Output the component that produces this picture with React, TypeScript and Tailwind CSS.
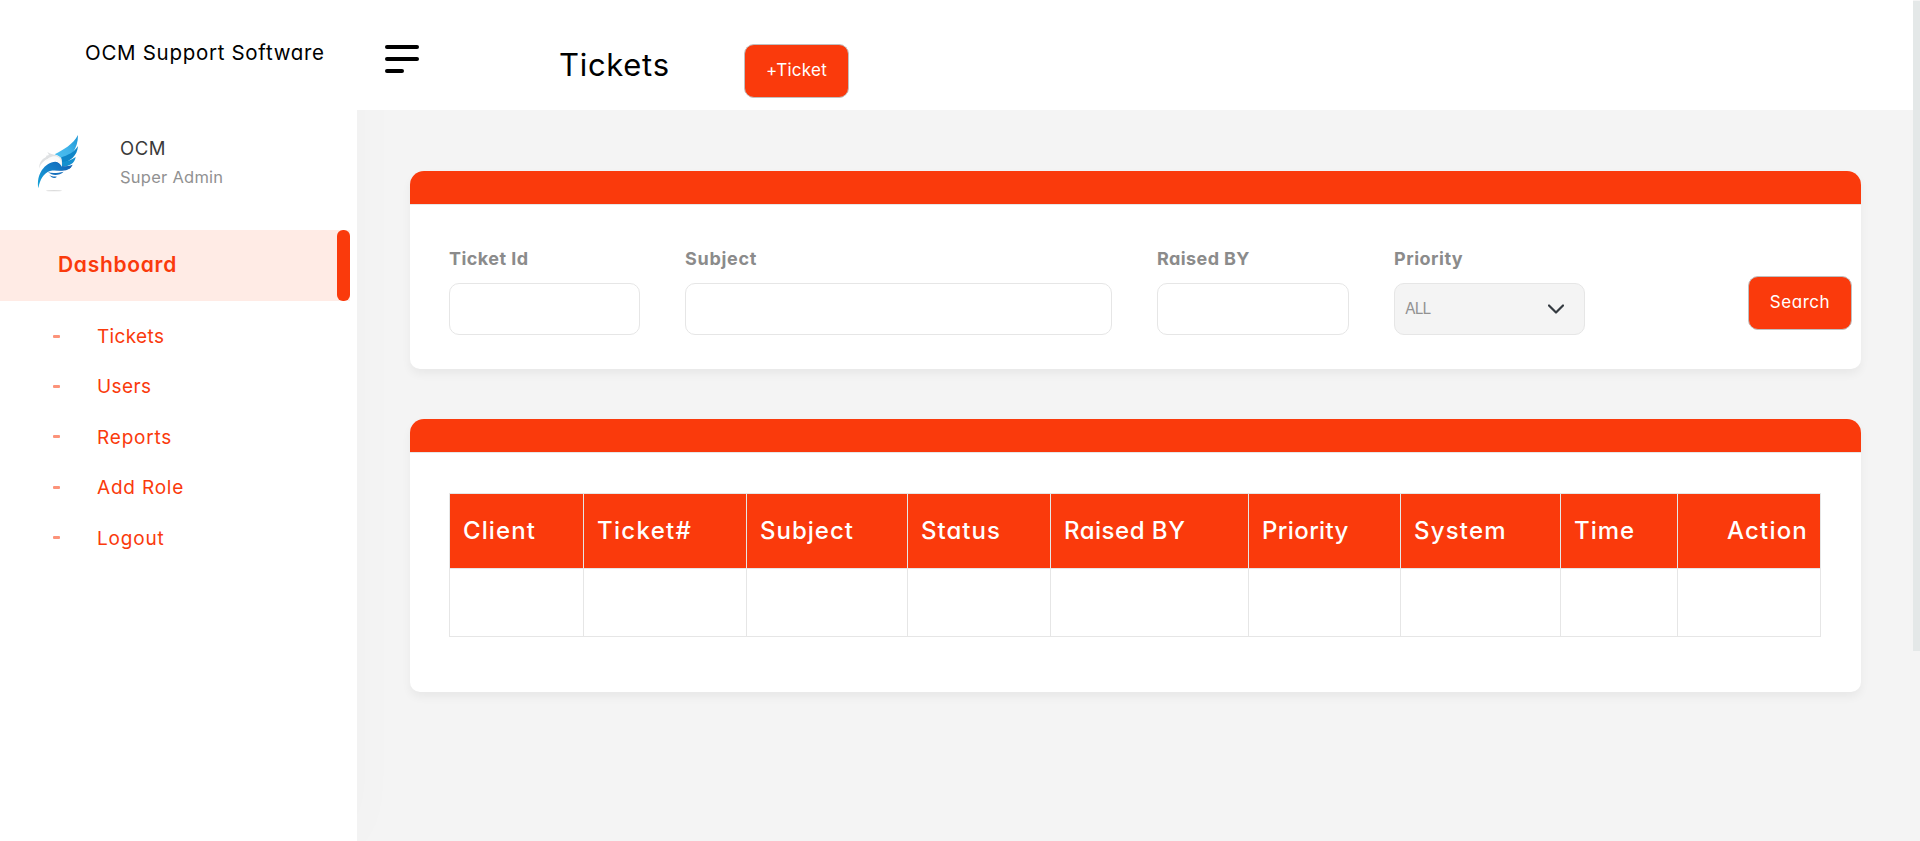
const menu = [
  { label: "Tickets", cls: "tracking-[0.35px]" },
  { label: "Users", cls: "tracking-[0.4px]" },
  { label: "Reports", cls: "tracking-[0.8px]" },
  { label: "Add Role", cls: "tracking-[0.8px]" },
  { label: "Logout", cls: "tracking-[0.8px]" },
];

const columns = [
  { label: "Client", cls: "w-[134px] tracking-[1.1px]" },
  { label: "Ticket#", cls: "w-[163px] tracking-[1.3px]" },
  { label: "Subject", cls: "w-[161px] tracking-[1px]" },
  { label: "Status", cls: "w-[143px] tracking-[1px]" },
  { label: "Raised BY", cls: "w-[198px] tracking-[0.5px]" },
  { label: "Priority", cls: "w-[152px] tracking-[0.4px]" },
  { label: "System", cls: "w-[160px] tracking-[1.2px]" },
  { label: "Time", cls: "w-[117px] tracking-[1px]" },
  { label: "Action", cls: "w-[143px] text-right tracking-[1.2px]" },
];

function WingLogo() {
  return (
    <svg className="h-20 w-20" viewBox="0 0 240 240">
      <defs>
        <linearGradient id="wing" x1="0" y1="1" x2="1" y2="0">
          <stop offset="0" stopColor="#4cc0f0" />
          <stop offset="0.5" stopColor="#41b4ea" />
          <stop offset="1" stopColor="#1a94d4" />
        </linearGradient>
        <linearGradient id="body" x1="0" y1="1" x2="1" y2="0">
          <stop offset="0" stopColor="#16a5d8" />
          <stop offset="0.5" stopColor="#1583cb" />
          <stop offset="1" stopColor="#1260b4" />
        </linearGradient>
      </defs>
      <path d="M174 45 C158 74 132 88 104 103 C118 108 125 113 127 122 C150 112 174 90 174 45Z" fill="url(#wing)" />
      <path d="M174 78 C162 98 142 106 124 112 L126 130 C150 124 172 108 174 78Z" fill="#0f86c8" />
      <path d="M167 111 C154 121 140 124 125 127 L116 140 C144 142 164 132 167 111Z" fill="#1590cf" />
      <path d="M158 134 C142 141 120 138 106 138 L96 150 C122 155 150 154 158 134Z" fill="#1465b5" />
      <path d="M55 205 C48 162 74 128 106 125 C116 126 122 132 124 138 C134 143 148 143 154 142 C136 156 108 148 90 153 C70 160 60 178 55 205Z" fill="url(#body)" />
      <path d="M84 157 C100 161 116 158 131 155 C118 167 98 168 84 157Z" fill="#1670bd" />
      <path d="M88 166 C96 170 104 170 111 170 C104 177 96 174 88 166Z" fill="#1670bd" />
      <path d="M57 146 C62 128 80 112 100 115 C114 117 122 128 125 140 C129 124 124 110 106 105 C98 103 92 102 82 96 L87 105 L77 108 C84 110 74 112 66 120 C59 128 57 137 57 146Z" fill="#dfe1e3" />
      <path d="M76 126 C84 118 98 116 108 122 C116 126 122 132 125 140 C127 124 122 113 108 109 C94 107 82 114 76 126Z" fill="#fafafa" />
      <ellipse cx="102" cy="212" rx="24" ry="2" fill="#dcdcdc" />
    </svg>
  );
}

function Field({ label, box, cls }: { label: string; box: string; cls: string }) {
  return (
    <label className="flex flex-col">
      <span className={"h-7 text-[18px] leading-7 font-bold whitespace-nowrap text-[#8b8b8b] " + cls}>{label}</span>
      <input className={"mt-[10px] h-[52px] rounded-[10px] border border-[#e6e6e6] bg-white " + box} />
    </label>
  );
}

export default function App() {
  return (
    <div className="flex h-[841px] w-full overflow-hidden bg-[#f4f4f4] font-['Inter',sans-serif] [font-feature-settings:'cv11']">
      <aside className="z-10 flex w-[357px] shrink-0 flex-col bg-white shadow-[0_0_60px_rgba(0,0,0,0.02)]">
        <div className="h-[110px] pt-[38px] pl-[85px] text-[20.5px] leading-[30px] tracking-[0.7px] whitespace-nowrap text-black">
          OCM Support Software
        </div>
        <div className="flex h-[120px] pt-[10px] pl-5">
          <WingLogo />
          <div className="pt-[15px] pl-5">
            <div className="text-[18.5px] leading-[27px] tracking-[0.5px] text-[#3a3a3a]">OCM</div>
            <div className="pt-[3px] text-[16.5px] leading-6 tracking-[0.25px] text-[#919191]">Super Admin</div>
          </div>
        </div>
        <div className="flex h-[71px] w-[350px] items-center justify-between bg-[#ffebe5] pl-[58px]">
          <span className="pb-px text-[21px] font-semibold tracking-[0.7px] text-[#fa3a0c]">Dashboard</span>
          <span className="h-[71px] w-[13px] rounded-[6px] bg-[#fa3a0c]" />
        </div>
        <nav className="flex flex-col pt-[10px]">
          {menu.map((i) => (
            <a key={i.label} className="flex h-[50.4px] items-center pl-[53px] text-[19px] text-[#fa3a0c]">
              <span className="mr-[37px] h-[3px] w-[7px] rounded-[1px] bg-[#fa3a0c]/55" />
              <span className={"pt-[2px] " + i.cls}>{i.label}</span>
            </a>
          ))}
        </nav>
      </aside>
      <div className="flex min-w-0 flex-1 flex-col">
        <header className="z-20 flex h-[110px] shrink-0 bg-white">
          <button className="mt-[45px] ml-7 flex h-7 w-[34px] flex-col gap-2">
            <span className="h-1 w-[34px] rounded-full bg-black" />
            <span className="h-1 w-[34px] rounded-full bg-black" />
            <span className="h-1 w-[19px] rounded-full bg-black" />
          </button>
          <h1 className="mt-[42px] ml-[140px] w-[185px] text-[31px] leading-[46px] tracking-[0.7px] text-black">Tickets</h1>
          <button className="mt-11 flex h-[54px] w-[105px] items-center justify-center rounded-[10px] border border-[#c0c0c0] bg-[#fa3a0c] text-[17px] tracking-[0.25px] text-white">
            +Ticket
          </button>
        </header>
        <main className="flex w-[1504px] flex-1 flex-col gap-[50px] pt-[61px] pl-[53px]">
          <section className="h-[198px] rounded-[14px] rounded-b-[10px] bg-white shadow-[0_5px_10px_rgba(0,0,0,0.05)]">
            <div className="h-[34px] rounded-t-[14px] border-b border-[#e6e6e6] bg-[#fa3a0c]" />
            <div className="flex pt-10 pl-[39px]">
              <Field label="Ticket Id" box="w-[191px] mr-[45px]" cls="tracking-[0.45px]" />
              <Field label="Subject" box="w-[427px] mr-[45px]" cls="tracking-[0.7px]" />
              <Field label="Raised BY" box="w-[192px] mr-[45px]" cls="tracking-[0.4px]" />
              <div className="flex flex-col">
                <span className="h-7 text-[18px] leading-7 font-bold tracking-[0.5px] text-[#8b8b8b]">Priority</span>
                <div className="mt-[10px] flex h-[52px] w-[191px] items-center justify-between rounded-[10px] border border-[#e6e6e6] bg-[#f4f4f4] pr-5 pl-[10px] text-[15.5px] tracking-[-1px] text-[#929292]">
                  ALL
                  <svg className="h-4 w-4" viewBox="0 0 16 16" fill="none" stroke="#343a40" strokeWidth="2.2" strokeLinecap="round" strokeLinejoin="round">
                    <path d="m1 4.5 7 7 7-7" />
                  </svg>
                </div>
              </div>
              <button className="mt-[31px] ml-[163px] flex h-[54px] w-[104px] items-center justify-center rounded-[10px] border border-[#c0c0c0] bg-[#fa3a0c] text-[17px] tracking-[0.55px] text-white">
                Search
              </button>
            </div>
          </section>
          <section className="h-[273px] rounded-[14px] rounded-b-[10px] bg-white shadow-[0_5px_10px_rgba(0,0,0,0.05)]">
            <div className="h-[34px] rounded-t-[14px] border-b border-[#e6e6e6] bg-[#fa3a0c]" />
            <table className="mt-10 ml-[39px] w-[1372px] table-fixed border-collapse">
              <thead>
                <tr className="h-[75px] bg-[#fa3a0c]">
                  {columns.map((c) => (
                    <th key={c.label} className={"border border-[#e6e6e6] pr-[12px] pl-[13px] text-left text-[24px] leading-none font-medium text-white " + c.cls}>
                      {c.label}
                    </th>
                  ))}
                </tr>
              </thead>
              <tbody>
                <tr className="h-[68px]">
                  {columns.map((c) => (
                    <td key={c.label} className="border border-[#e6e6e6]" />
                  ))}
                </tr>
              </tbody>
            </table>
          </section>
        </main>
      </div>
      <div className="mt-px h-[650px] w-[7px] shrink-0 bg-[#e4e8e8]" />
    </div>
  );
}
